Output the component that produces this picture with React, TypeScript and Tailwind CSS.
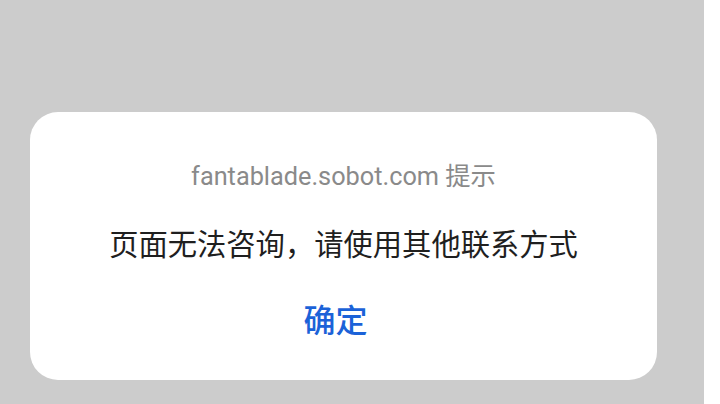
export default function App() {
  return (
    <div className="flex h-[404px] w-[720px] bg-white" style={{ fontFamily: 'Roboto, "Noto Sans CJK SC", sans-serif' }}>
      <div className="h-full w-[704px] bg-[#cccccc] pl-[30px] pt-[112px]">
        <div className="flex h-[268px] w-[627px] flex-col items-center rounded-[28px] bg-white">
          <p className="mt-[49px] text-[25.3px] leading-[32px] text-[#8a8a8a]">fantablade.sobot.com 提示</p>
          <p className="mt-[32px] text-[29.3px] leading-[40px] text-[#1f1f1f]">页面无法咨询，请使用其他联系方式</p>
          <button className="mr-[16px] mt-[36px] text-[32px] font-medium leading-[40px] text-[#1b62d8]">确定</button>
        </div>
      </div>
    </div>
  )
}
